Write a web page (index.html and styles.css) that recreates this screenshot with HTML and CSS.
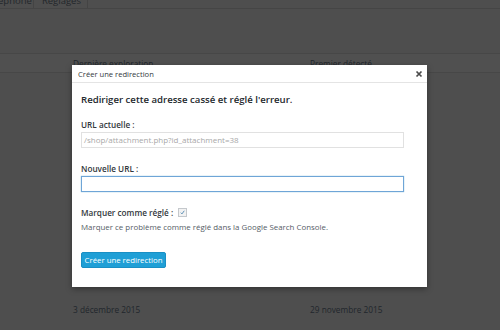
FILE: index.html
```html
<!DOCTYPE html>
<html lang="fr">
<head>
<meta charset="utf-8">
<title>Créer une redirection</title>
<link rel="stylesheet" href="styles.css">
</head>
<body>
<div class="page">
  <div class="tabs">
    <div class="tab tab-first">Autre téléphone</div>
    <div class="tab">Réglages</div>
  </div>
  <div class="table">
    <div class="row row-head">
      <div class="cell cell-a">Dernière exploration</div>
      <div class="cell cell-b">Premier détecté</div>
    </div>
    <div class="row row-body"></div>
    <div class="row row-date">
      <div class="cell cell-a">3 décembre 2015</div>
      <div class="cell cell-b">29 novembre 2015</div>
    </div>
  </div>
</div>

<div class="modal">
  <div class="modal-head">
    <span class="modal-title">Créer une redirection</span>
    <svg class="modal-close" viewBox="0 0 8 8" width="8" height="8"><path d="M1.5 1.5 L6.5 6.5 M6.5 1.5 L1.5 6.5" stroke="#4a4a4a" stroke-width="1.7" fill="none"/></svg>
  </div>
  <div class="modal-body">
    <h2 class="heading">Rediriger cette adresse cassé et réglé l'erreur.</h2>
    <div class="label">URL actuelle :</div>
    <div class="input input-readonly">/shop/attachment.php?id_attachment=38</div>
    <div class="label label-gap">Nouvelle URL :</div>
    <div class="input input-focus"></div>
    <div class="label label-gap check-row">Marquer comme réglé : <span class="checkbox"><svg viewBox="0 0 8 8" width="7" height="7"><path d="M2 4.2 L3.4 5.6 L6 2" fill="none" stroke="#5b8fb5" stroke-width="1.1"/></svg></span></div>
    <div class="desc">Marquer ce problème comme réglé dans la Google Search Console.</div>
    <div class="button">Créer une redirection</div>
  </div>
</div>
</body>
</html>
```

FILE: styles.css
```css
html, body {
  margin: 0;
  padding: 0;
}
body {
  width: 500px;
  height: 330px;
  overflow: hidden;
  background: #4e4e4e;
  font-family: "Open Sans", "DejaVu Sans", sans-serif;
  position: relative;
}
.page {
  display: flex;
  flex-direction: column;
}
.tabs {
  height: 8px;
  border-bottom: 1px solid #454545;
  display: flex;
  align-items: flex-end;
  overflow: hidden;
}
.tab {
  font-size: 9.5px;
  line-height: 11px;
  color: #23272b;
  padding: 0 6px 3px 8px;
  border-right: 1px solid #444;
  height: 11px;
  margin-bottom: -1px;
}
.tab-first {
  margin-left: -48px;
  padding-right: 1px;
}
.table {
  display: flex;
  flex-direction: column;
  margin-top: 44px;
}
.row {
  display: flex;
}
.row-head {
  height: 18px;
  align-items: center;
  border-top: 1px solid #474747;
  border-bottom: 1px solid #474747;
  background: #505050;
}
.row-body {
  height: 226px;
}
.row-date {
  height: 20px;
  align-items: center;
}
.cell {
  font-size: 8.3px;
  color: #21262c;
}
.cell-a {
  padding-left: 73px;
  width: 237px;
}
.cell-b {
  padding-left: 0;
}

.modal {
  position: absolute;
  left: 72px;
  top: 65px;
  width: 355px;
  height: 222px;
  background: #fff;
  box-shadow: 0 2px 6px rgba(0,0,0,0.35);
  display: flex;
  flex-direction: column;
}
.modal-head {
  height: 17px;
  border-bottom: 1px solid #e4e4e4;
  display: flex;
  align-items: center;
  justify-content: space-between;
  padding: 0 4px 0 6px;
}
.modal-title {
  font-size: 7.6px;
  color: #32373c;
}
.modal-close {
  display: block;
}
.modal-body {
  padding: 9px 9px 0 9px;
  display: flex;
  flex-direction: column;
  align-items: flex-start;
}
.heading {
  margin: 0;
  font-size: 9.6px;
  font-weight: 600;
  line-height: 15px;
  color: #23282d;
}
.label {
  margin-top: 11.5px;
  font-size: 8.2px;
  font-weight: 600;
  line-height: 12px;
  color: #32373c;
}
.label-gap {
  margin-top: 15px;
}
.input {
  margin-top: 1px;
  width: 319px;
  height: 14px;
  border: 1px solid #e1e1e1;
  font-size: 8px;
  line-height: 14px;
  padding: 0 0 0 2px;
  color: #a8a8a8;
  box-sizing: content-box;
}
.input-focus {
  border-color: #6fa5d7;
  box-shadow: 0 0 1px rgba(30,140,190,0.6);
}
.check-row {
  display: flex;
  align-items: center;
}
.checkbox {
  margin-left: 5px;
  width: 7px;
  height: 7px;
  border: 1px solid #c4c8cc;
  background: #f2f2f2;
  display: flex;
  align-items: center;
  justify-content: center;
  overflow: hidden;
}
.desc {
  margin-top: 2.5px;
  font-size: 7.9px;
  line-height: 12px;
  color: #555d66;
}
.button {
  margin-top: 18.5px;
  width: 85px;
  height: 16px;
  box-sizing: border-box;
  background: #1f9fd6;
  border: 1px solid #1a8fc4;
  border-radius: 2px;
  color: #fff;
  font-size: 7.8px;
  line-height: 14px;
  text-align: center;
}
```
